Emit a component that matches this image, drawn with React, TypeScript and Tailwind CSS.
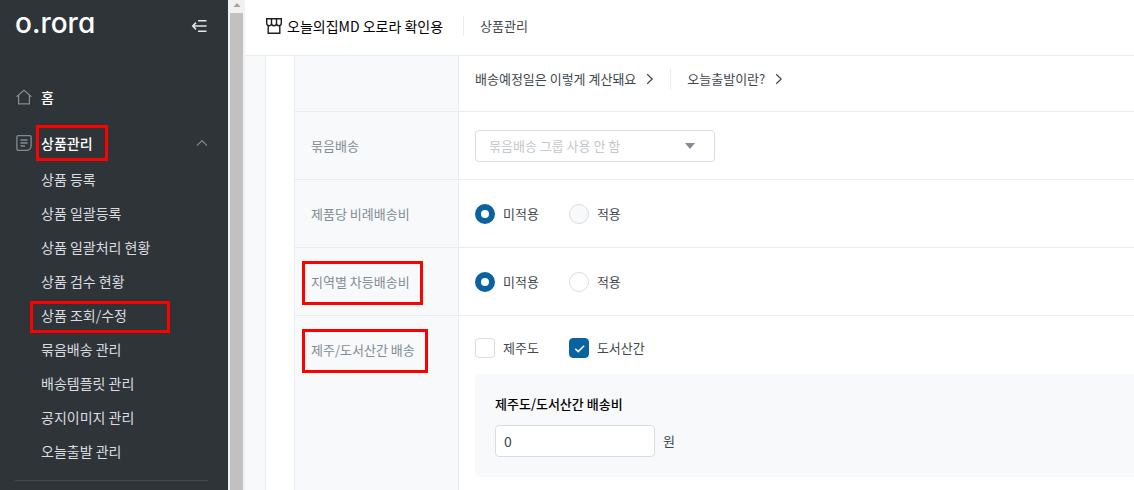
import { FC, ReactNode } from "react";

const menuItems = [
    { label: "상품 등록" },
    { label: "상품 일괄등록" },
    { label: "상품 일괄처리 현황" },
    { label: "상품 검수 현황" },
    { label: "상품 조회/수정", marked: true },
    { label: "묶음배송 관리" },
    { label: "배송템플릿 관리" },
    { label: "공지이미지 관리" },
    { label: "오늘출발 관리" },
];

const Sidebar: FC = () => {
    return (
        <aside className="w-[228px] shrink-0 bg-[#2f3438] pl-[15px] pr-5 overflow-hidden">
            <div className="h-[78px] flex justify-between items-start">
                <a href="#" className="font-['Inter'] text-[28px] leading-[46px] font-medium text-white [font-feature-settings:'cv11']">o.rora</a>
                <button type="button" aria-label="메뉴 접기" className="mt-[18px]">
                    <svg width="17" height="16" viewBox="0 0 17 16" fill="none" stroke="#e4e5e7" strokeWidth="1.6">
                        <path d="M7 2.8h8.5M2 8h13.5M7 13.2h8.5M5 4.6 1.8 8 5 11.4" />
                    </svg>
                </button>
            </div>
            <nav className="text-[14px]">
                <a href="#" className="h-[38px] mb-2 flex items-center gap-2 font-medium text-white">
                    <svg width="18" height="18" viewBox="0 0 18 18" fill="none" stroke="#828c94" strokeWidth="1.2">
                        <path d="M1.6 8.8 9 2.2l7.4 6.6M3.6 7.2v8.7h10.8V7.2" />
                    </svg>
                    홈
                </a>
                <button type="button" aria-expanded="true" className="w-full h-[38px] flex items-center gap-2 font-medium text-white">
                    <svg width="18" height="18" viewBox="0 0 18 18" fill="none" stroke="#828c94" strokeWidth="1.3">
                        <path d="M3.2 1.6h11.6a1.3 1.3 0 0 1 1.3 1.3v8.9a4.6 4.6 0 0 1-4.6 4.6H3.2a1.3 1.3 0 0 1-1.3-1.3V2.9a1.3 1.3 0 0 1 1.3-1.3zM5.5 6h7M5.5 9h7M5.5 12h4.5" />
                    </svg>
                    <span className="relative">
                        상품관리
                        <span className="absolute -left-[5px] -right-[15px] top-1/2 -translate-y-1/2 h-9 border-3 border-[#ff0000]" />
                    </span>
                    <svg width="12" height="8" viewBox="0 0 12 8" fill="none" stroke="#828c94" strokeWidth="1.1" className="ml-auto">
                        <path d="M1 6.6 6 1.6l5 5" />
                    </svg>
                </button>
                <ul>
                    {menuItems.map((item) => (
                        <li key={item.label} className="relative h-[34px] pl-[26px] flex items-center">
                            <a href="#" className="text-[#dadce0]">{item.label}</a>
                            {item.marked && <span className="absolute left-[15px] right-[38px] top-[3px] h-8 border-3 border-[#ff0000]" />}
                        </li>
                    ))}
                </ul>
                <hr className="mt-3 border-[#424a50]" />
            </nav>
        </aside>
    )
}

const ScrollTrack: FC = () => {
    return (
        <div className="w-[17px] shrink-0 bg-[#f1f1f1] flex flex-col items-center">
            <svg width="8" height="13" viewBox="0 0 8 13" fill="#a3a3a3" className="shrink-0">
                <path d="M.5 7 4 3l3.5 4z" />
            </svg>
            <div className="w-[13px] flex-1 bg-[#c1c1c1]" />
        </div>
    )
}

const Chevron: FC = () => (
    <svg width="8" height="12" viewBox="0 0 8 12" fill="none" stroke="#3f474d" strokeWidth="1.2">
        <path d="M1.2 1.2 6.2 6l-5 4.8" />
    </svg>
)

type RowProps = {
    label?: string,
    marked?: boolean,
    last?: boolean,
    children: ReactNode,
}

const Row: FC<RowProps> = ({ label, marked, last, children }) => {
    const border = last ? "" : "border-b";

    return (
        <tr className="h-[68px] align-top">
            <th scope="row" className={`w-[165px] border-x ${border} border-[#eaedef] bg-[#f7f9fa] pt-6 pl-4 text-left font-normal text-[#828c94]`}>
                <span className="relative inline-block">
                    {label}
                    {marked && <span className="absolute -left-[9px] -right-[13px] -top-[11px] h-11 border-3 border-[#ff0000]" />}
                </span>
            </th>
            <td className={`${border} border-[#eaedef] pl-4`}>{children}</td>
        </tr>
    )
}

type ChoiceProps = {
    name: string,
    label: string,
    checked?: boolean,
    disabled?: boolean,
}

const Radio: FC<ChoiceProps> = ({ name, label, checked, disabled }) => (
    <label className="flex items-center gap-2">
        <input type="radio" name={name} defaultChecked={checked} disabled={disabled}
            className="appearance-none size-5 rounded-full border border-[#dadce0] bg-white checked:border-6 checked:border-[#0a62a0] disabled:bg-[#f7f9fa]" />
        {label}
    </label>
)

const Checkbox: FC<ChoiceProps> = ({ name, label, checked }) => (
    <label className="flex items-center gap-2">
        <span className="relative size-5">
            <input type="checkbox" name={name} defaultChecked={checked}
                className="peer block appearance-none size-5 rounded-sm border border-[#dadce0] bg-white checked:border-[#0a62a0] checked:bg-[#0a62a0]" />
            <svg viewBox="0 0 20 20" fill="none" stroke="white" strokeWidth="1.5" className="absolute inset-0 size-5 hidden peer-checked:block pointer-events-none">
                <path d="m6.3 10.7 2.9 2.9 5.9-5.9" />
            </svg>
        </span>
        {label}
    </label>
)

const Header: FC = () => {
    return (
        <header className="h-14 shrink-0 border-b border-[#eaedef] bg-white flex items-center pl-5 pb-1">
            <svg width="18" height="18" viewBox="0 0 18 18" fill="none" stroke="#1b1d1f" strokeWidth="1.4">
                <path d="M1.7 1.7h14.6v4.6a2.4 2.4 0 0 1-4.8 0 2.5 2.5 0 0 1-5 0 2.4 2.4 0 0 1-4.8 0zM6.5 1.7v4.6M11.5 1.7v4.6M3.2 8.7v7.6h11.6V8.7" />
            </svg>
            <strong className="ml-1 text-[14px] font-normal text-black">오늘의집MD 오로라 확인용</strong>
            <span className="ml-5 mr-4 w-px h-5 bg-[#eaedef]" />
            <h1>상품관리</h1>
        </header>
    )
}

const DeliveryForm: FC = () => {
    return (
        <form className="flex-1 min-h-0 ml-5 border-l border-[#eaedef] bg-white pl-7 overflow-hidden">
            <table className="w-full border-separate border-spacing-0">
                <tbody>
                    <tr className="h-14 align-top">
                        <th className="w-[165px] border-x border-b border-[#eaedef] bg-[#f7f9fa]" />
                        <td className="border-b border-[#eaedef] pl-4 pt-[13px]">
                            <div className="flex items-center">
                                <a href="#" className="flex items-center gap-2.5">배송예정일은 이렇게 계산돼요 <Chevron /></a>
                                <span className="mx-4 w-px h-5 bg-[#eaedef]" />
                                <a href="#" className="flex items-center gap-2.5">오늘출발이란? <Chevron /></a>
                            </div>
                        </td>
                    </tr>
                    <Row label="묶음배송">
                        <div className="relative mt-[18px] w-60">
                            <select disabled aria-label="묶음배송" className="appearance-none block w-full h-8 rounded-sm border border-[#dadce0] bg-white px-[13px] text-[#c2c8cc] disabled:opacity-100">
                                <option>묶음배송 그룹 사용 안 함</option>
                            </select>
                            <svg width="10" height="6" viewBox="0 0 10 6" fill="#828c94" className="absolute right-5 top-[13px] pointer-events-none">
                                <path d="M0 0h10L5 6z" />
                            </svg>
                        </div>
                    </Row>
                    <Row label="제품당 비례배송비">
                        <div className="pt-6 flex gap-[30px]">
                            <Radio name="unitFee" label="미적용" checked />
                            <Radio name="unitFee" label="적용" disabled />
                        </div>
                    </Row>
                    <Row label="지역별 차등배송비" marked>
                        <div className="pt-6 flex gap-[30px]">
                            <Radio name="regionFee" label="미적용" checked />
                            <Radio name="regionFee" label="적용" />
                        </div>
                    </Row>
                    <Row label="제주/도서산간 배송" marked last>
                        <div className="pt-[22px] pb-6 flex flex-col gap-4">
                            <div className="flex gap-[30px]">
                                <Checkbox name="jeju" label="제주도" />
                                <Checkbox name="island" label="도서산간" checked />
                            </div>
                            <div className="rounded-l-sm bg-[#f7f9fa] p-5">
                                <label htmlFor="extraFee" className="block font-medium text-black">제주도/도서산간 배송비</label>
                                <div className="mt-[11px] flex items-center gap-2">
                                    <input id="extraFee" type="text" defaultValue="0" className="w-40 h-8 rounded-sm border border-[#dadce0] bg-white px-2 text-[14px]" />
                                    원
                                </div>
                            </div>
                        </div>
                    </Row>
                </tbody>
            </table>
        </form>
    )
}

const App: FC = () => {
    return (
        <div className="h-screen flex overflow-hidden bg-[#f7f9fa] font-['Noto_Sans_CJK_KR',sans-serif] text-[13px] leading-5 text-[#3f474d]">
            <Sidebar />
            <ScrollTrack />
            <main className="flex-1 min-w-0 flex flex-col">
                <Header />
                <DeliveryForm />
            </main>
        </div>
    )
}

export default App;
